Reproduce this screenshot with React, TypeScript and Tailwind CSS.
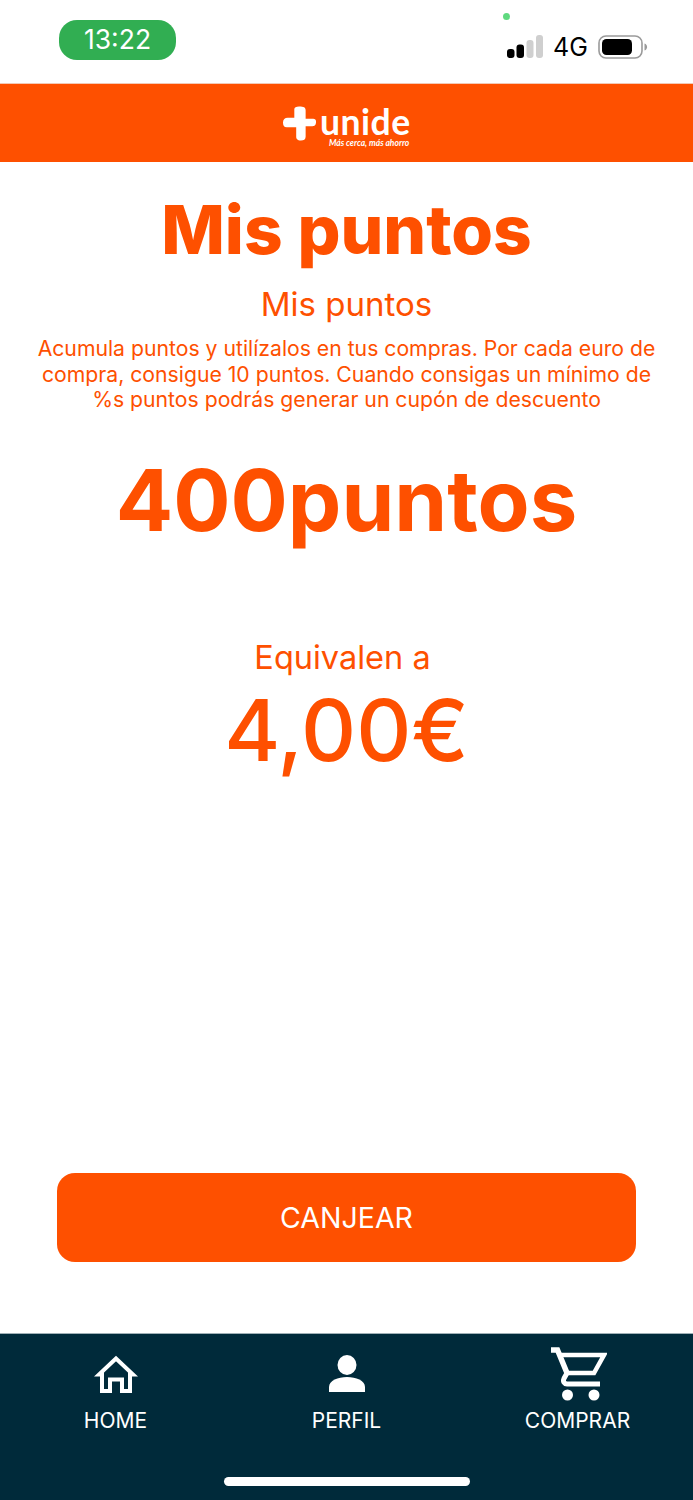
import React from 'react';

const ORANGE = 'text-[#fe5000]';

const SignalIcon = () => (
  <svg width="36" height="24" viewBox="0 0 36 24">
    <rect x="0" y="14" width="7.500" height="9" rx="3" fill="#000" />
    <rect x="9.500" y="9.500" width="7.500" height="13.500" rx="3" fill="#000" />
    <rect x="19.500" y="5" width="7" height="18" rx="3" fill="#cfcfcf" />
    <rect x="29" y="0" width="7" height="23" rx="3" fill="#cfcfcf" />
  </svg>
);

const BatteryIcon = () => (
  <svg width="50" height="24" viewBox="0 0 50 24">
    <rect x="1" y="1" width="43" height="22" rx="7" fill="#fff" stroke="#9a9a9a" strokeWidth="1.600" />
    <rect x="4" y="4" width="30" height="16" rx="4.500" fill="#000" />
    <path d="M46.500 8.500c1.800.6 2.600 2 2.600 3.500s-.8 2.900-2.600 3.500z" fill="#9a9a9a" />
  </svg>
);

const HomeIcon = () => (
  <svg width="44" height="38" viewBox="0 0 44 38" fill="none" stroke="#fff" strokeWidth="4">
    <path d="M22 3.500 5 19.500H8V36h8V24.500h12V36h8V19.500h3z" />
  </svg>
);

const UserIcon = () => (
  <svg width="38" height="38" viewBox="0 0 38 38" fill="#fff">
    <ellipse cx="19" cy="10" rx="9.500" ry="10" />
    <path d="M1 37v-5c0-6.500 9-10 18-10s18 3.500 18 10v5z" />
  </svg>
);

const CartIcon = () => (
  <svg width="56" height="54" viewBox="0 0 56 54" fill="none" stroke="#fff" strokeWidth="4.500">
    <path d="M0 3h6.500L16 26" strokeWidth="5.500" />
    <path d="M9 8h44L43 26H16" />
    <path d="M16 26l-3 5.500c-1.500 3 .5 5.500 3 5.500h33" strokeWidth="5" />
    <circle cx="16.500" cy="48" r="5.500" fill="#fff" stroke="none" />
    <circle cx="43" cy="48" r="5.500" fill="#fff" stroke="none" />
  </svg>
);

const NavItem = ({ icon, label }: { icon: React.ReactNode; label: string }) => (
  <div className="flex flex-1 flex-col items-center">
    <div className="flex h-[46px] items-end justify-center">{icon}</div>
    <span className="mt-[16px] text-[21px] leading-[24px] text-white">{label}</span>
  </div>
);

export default function App() {
  return (
    <div className="flex h-[1500px] w-[693px] flex-col overflow-hidden bg-white font-['Inter',sans-serif]">
      {/* status bar */}
      <div className="relative h-[84px] shrink-0 border-b border-[#f3c9b5]">
        <div className="absolute left-[59px] top-[20px] flex h-[40px] w-[117px] items-center justify-center rounded-[18px] bg-[#31ae52] text-[26.500px] text-white">
          13:22
        </div>
        <div className="absolute left-[503px] top-[13px] h-[7px] w-[7px] rounded-full bg-[#5fd97f]" />
        <div className="absolute left-[507px] top-[35px] flex items-center">
          <SignalIcon />
          <span className="ml-[10px] text-[25px] leading-[24px] text-black">4G</span>
          <span className="ml-[10px]"><BatteryIcon /></span>
        </div>
      </div>

      {/* header logo */}
      <header className="flex h-[78px] shrink-0 items-center justify-center bg-[#fe5000]">
        <div className="relative flex h-[46px] w-[127px] items-start pl-[37px]">
          <svg className="absolute left-0 top-[6px]" width="33" height="35" viewBox="0 0 35 36">
            <path d="M12 3c0-2 2-3 5-3 5 0 7 1 7 4v9h8c2 0 3 1 3 3v1c0 3-2 4-4 4h-7v11c0 3-2 4-5 4-4 0-5-2-5-4V22H4c-3 0-4-2-4-5 0-3 2-5 5-5h7z" fill="#fff" />
          </svg>
          <span className="mt-[6px] font-['Lato',sans-serif] text-[35.500px] font-bold leading-[32px] tracking-[0.5px] text-white">unide</span>
          <span className="absolute left-[46px] top-[38px] whitespace-nowrap font-['Lato',sans-serif] text-[8.500px] italic font-bold leading-[10px] text-white">
            Más cerca, más ahorro
          </span>
        </div>
      </header>

      {/* points summary */}
      <main className={`flex flex-1 flex-col items-center ${ORANGE}`}>
        <h1 className="mt-[28px] text-[67.500px] font-extrabold leading-[80px]">Mis puntos</h1>
        <h2 className="mt-[13px] text-[33px] leading-[42px]">Mis puntos</h2>
        <p className="mt-[11px] w-[640px] text-center text-[21.200px] leading-[25.500px]">
          Acumula puntos y utilízalos en tus compras. Por cada euro de compra, consigue 10 puntos. Cuando consigas un mínimo de %s puntos podrás generar un cupón de descuento
        </p>
        <div className="mt-[33px] text-[85px] font-bold leading-[110px]">400puntos</div>
        <div className="mt-[80px] pr-[8px] text-[32.500px] leading-[44px]">Equivalen a</div>
        <div className="-mt-[4px] text-[85.500px] font-medium leading-[108px]">4,00€</div>
        <button className="mt-auto mb-[71px] h-[89px] w-[579px] rounded-[18px] bg-[#fe5000] pt-[2px] text-[28.500px] text-white">
          CANJEAR
        </button>
      </main>

      {/* bottom navigation */}
      <nav className="relative h-[167px] shrink-0 border-t border-[#9fb0b6] bg-[#002a3a]">
        <div className="flex pt-[13px]">
          <NavItem icon={<HomeIcon />} label="HOME" />
          <NavItem icon={<UserIcon />} label="PERFIL" />
          <NavItem icon={<span className="-mb-[8px] ml-[2px]"><CartIcon /></span>} label="COMPRAR" />
        </div>
        <div className="absolute bottom-[14px] left-[224px] h-[9px] w-[246px] rounded-full bg-white" />
      </nav>
    </div>
  );
}
